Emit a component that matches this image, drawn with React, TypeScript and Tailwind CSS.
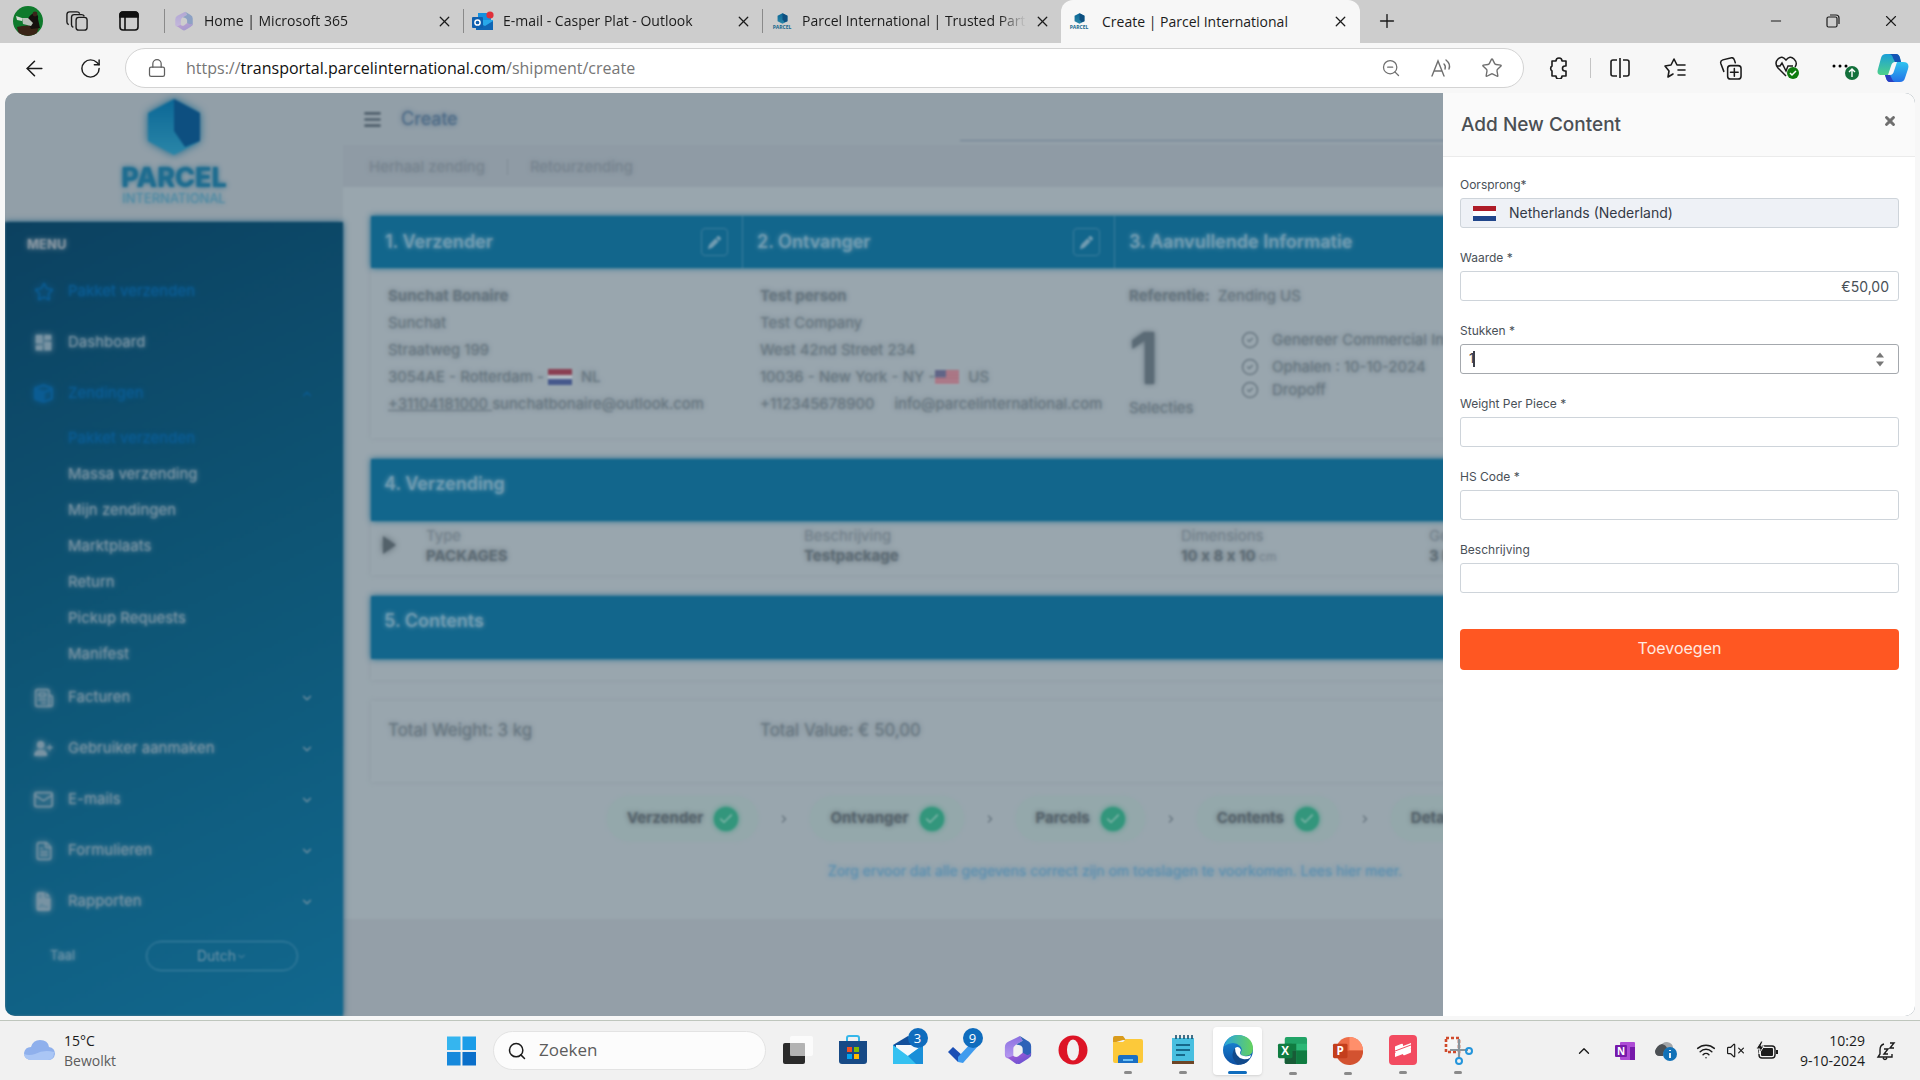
import { ReactNode, useState } from "react";
import {
  ArrowLeft,
  Check,
  ChevronDown,
  ChevronRight,
  ChevronUp,
  CircleCheck,
  FileText,
  Lock,
  Mail,
  Menu,
  Minus,
  Newspaper,
  Plus,
  RotateCw,
  Search,
  Star,
  VolumeX,
  Wifi,
  X,
  ZoomOut,
} from "lucide-react";
import { FaCube, FaFileContract, FaPen, FaUserPlus, FaXmark } from "react-icons/fa6";
import { MdDashboard } from "react-icons/md";

/* ---------- small drawings ---------- */

function ParcelMark({ className }: { className: string }) {
  return (
    <svg viewBox="0 0 54 58" className={className} aria-hidden="true">
      <defs>
        <linearGradient id="markFront" x1="0" y1="0" x2="0" y2="1">
          <stop offset="0" stopColor="#0b6796" />
          <stop offset="1" stopColor="#2a86a8" />
        </linearGradient>
      </defs>
      <path d="M27 1 53 15v28L27 57 1 43V15Z" fill="url(#markFront)" />
      <path d="M27 1 53 15v28L38 49 27 33Z" fill="#0d4f80" />
    </svg>
  );
}

function ParcelFavicon() {
  return (
    <span className="flex w-[18px] shrink-0 flex-col items-center">
      <ParcelMark className="h-[11px] w-[11px]" />
      <span className="text-[5px] leading-[6px] font-bold text-[#12668c]">PARCEL</span>
    </span>
  );
}

function LoopIcon({ className }: { className: string }) {
  return (
    <svg viewBox="0 0 32 32" className={className} aria-hidden="true">
      <defs>
        <linearGradient id="loopA" x1="0" y1="0" x2="1" y2="1">
          <stop offset="0" stopColor="#b35fd8" />
          <stop offset="1" stopColor="#5a4fd0" />
        </linearGradient>
        <linearGradient id="loopB" x1="0" y1="0" x2="0" y2="1">
          <stop offset="0" stopColor="#8a6fe0" />
          <stop offset="1" stopColor="#b79af0" />
        </linearGradient>
      </defs>
      <path d="M18 1 6 7Q2 9 2 13v8q0 4 4 4l5-2v-8q0-3 3-5l7-4Z" fill="url(#loopB)" />
      <path d="m18 1 8 5q4 2 4 6v9q0 3-4 3l-5-2v-7q0-3-3-4l-4-1 7-4Z" fill="#2f62b8" />
      <path d="M2 19q0 4 4 6l7 5q3 2 6 0l8-5q3-2 3-6-2 3-5 2l-4-2-5 4q-2 1-4 0l-1-1-5 2q-3 0-4-5Z" fill="url(#loopA)" />
    </svg>
  );
}

function OutlookIcon() {
  return (
    <svg viewBox="0 0 22 20" className="h-5 w-[22px] shrink-0" aria-hidden="true">
      <rect x="6" y="2" width="13" height="11" fill="#1490df" />
      <path d="M4 9h17v10H4Z" fill="#28a8ea" />
      <path d="m4 11 9 4 8-5v9H4Z" fill="#1066b5" />
      <rect x="0" y="6" width="11" height="11" rx="1" fill="#0f5fae" />
      <circle cx="5.5" cy="11.5" r="2.6" fill="none" stroke="#fff" strokeWidth="1.5" />
      <circle cx="18" cy="4" r="3.6" fill="#e0303a" />
    </svg>
  );
}

function Avatar() {
  return (
    <svg viewBox="0 0 30 30" className="h-[30px] w-[30px]" aria-hidden="true">
      <defs>
        <clipPath id="avatarClip">
          <circle cx="15" cy="15" r="15" />
        </clipPath>
      </defs>
      <g clipPath="url(#avatarClip)">
        <rect width="30" height="30" fill="#0f7a2c" />
        <path d="M4 21q10-3 22 0l-3 9H6Z" fill="#3a2416" />
        <path d="M14 15q2-6 7-8 5 1 4 6l2 9-9 1Z" fill="#15100e" />
        <path d="M9 12h6l5 5-2 3-8-2Z" fill="#b9c2b8" />
        <path d="M3 10l6 2v3l-5-1Z" fill="#d5dcd3" />
        <circle cx="22" cy="8" r="2.4" fill="#3b241b" />
      </g>
    </svg>
  );
}

function WorkspacesIcon() {
  return (
    <svg viewBox="0 0 24 24" className="h-[22px] w-[22px]" fill="none" stroke="#1b1b1b" strokeWidth="1.5" strokeLinejoin="round" aria-hidden="true">
      <rect x="11" y="8" width="12" height="14" rx="3" />
      <path d="M8 19q-2-1-2-3V8q0-3 3-3h8q2 0 3 2" />
      <path d="M3 16q-2-1-2-3V5q0-3 3-3h8q2 0 3 2" />
    </svg>
  );
}

function TabActionsIcon() {
  return (
    <svg viewBox="0 0 20 20" className="h-5 w-5" fill="none" stroke="#111" strokeWidth="1.6" aria-hidden="true">
      <rect x="1" y="1" width="18" height="18" rx="3" />
      <path d="M1 4q0-3 3-3h12q3 0 3 3v2H1Z" fill="#111" />
      <path d="M6 6v13" />
    </svg>
  );
}

function RestoreIcon() {
  return (
    <svg viewBox="0 0 14 14" className="h-[14px] w-[14px]" fill="none" stroke="#1b1b1b" strokeWidth="1.2" aria-hidden="true">
      <rect x="1" y="3" width="10" height="10" rx="1.5" />
      <path d="M4 1h6q3 0 3 3v6" />
    </svg>
  );
}

function PuzzleIcon() {
  return (
    <svg viewBox="0 0 22 22" className="h-[22px] w-[22px]" fill="none" stroke="#1b1b1b" strokeWidth="1.6" strokeLinejoin="round" aria-hidden="true">
      <path d="M8 4a3 3 0 0 1 6 0h4v5h-1a2.500 2.500 0 0 0 0 5h1v5h-4a3 3 0 0 1-6 0H4v-5a3 3 0 0 1 0-5V4Z" />
    </svg>
  );
}

function ReadAloudIcon() {
  return (
    <svg viewBox="0 0 22 20" className="h-5 w-[22px]" fill="none" stroke="#6f6f6f" strokeWidth="1.4" strokeLinecap="round" aria-hidden="true">
      <path d="M2 18 8 3l6 15M4 13h8M14 6q2 2 1 5M16 2q5 4 3 9" />
    </svg>
  );
}

function SplitIcon() {
  return (
    <svg viewBox="0 0 22 22" className="h-[22px] w-[22px]" fill="none" stroke="#1b1b1b" strokeWidth="1.6" aria-hidden="true">
      <path d="M8 3H4Q2 3 2 5v12q0 2 2 2h4M14 3h4q2 0 2 2v12q0 2-2 2h-4M11 1v20" />
    </svg>
  );
}

function FavoritesIcon() {
  return (
    <svg viewBox="0 0 24 22" className="h-[22px] w-6" fill="none" stroke="#1b1b1b" strokeWidth="1.6" strokeLinecap="round" strokeLinejoin="round" aria-hidden="true">
      <path d="M10 17 5 20l1-6-4-5 6-1 3-6 3 6h8M15 13h7M15 18h7" />
    </svg>
  );
}

function CollectionsIcon() {
  return (
    <svg viewBox="0 0 24 24" className="h-[23px] w-[23px]" fill="none" stroke="#1b1b1b" strokeWidth="1.6" strokeLinecap="round" aria-hidden="true">
      <rect x="9" y="9" width="14" height="14" rx="3" />
      <path d="M16 12v8M12 16h8M5 15 2 7q-1-3 2-4l8-2q3-1 4 2l1 3" />
    </svg>
  );
}

function EssentialsIcon() {
  return (
    <svg viewBox="0 0 26 26" className="h-[26px] w-[26px]" aria-hidden="true">
      <path d="M12 21 4 13Q0 8 4 4t8 1q4-5 8-1t1 8M2 11h4l2-3 4 8 2-5h5" fill="none" stroke="#1b1b1b" strokeWidth="1.5" />
      <circle cx="19" cy="18" r="6" fill="#0f7b0f" />
      <path d="m16 18 2 2 4-4" fill="none" stroke="#fff" strokeWidth="1.5" />
    </svg>
  );
}

function MoreIcon() {
  return (
    <svg viewBox="0 0 28 26" className="h-[26px] w-7" aria-hidden="true">
      <circle cx="3" cy="11" r="1.5" />
      <circle cx="9" cy="11" r="1.5" />
      <circle cx="15" cy="11" r="1.5" />
      <circle cx="21" cy="18" r="7" fill="#13703b" />
      <path d="M21 22v-8m-3 3 3-3 3 3" fill="none" stroke="#fff" strokeWidth="1.4" />
    </svg>
  );
}

function CopilotIcon() {
  return (
    <svg viewBox="0 0 32 30" className="h-[30px] w-8" aria-hidden="true">
      <defs>
        <linearGradient id="copA" x1="0" y1="0" x2="0" y2="1">
          <stop offset="0" stopColor="#1a9fd8" />
          <stop offset="1" stopColor="#4fd18a" />
        </linearGradient>
        <linearGradient id="copB" x1="0" y1="0" x2="0" y2="1">
          <stop offset="0" stopColor="#2fc4ef" />
          <stop offset="1" stopColor="#2472e8" />
        </linearGradient>
      </defs>
      <path d="M9 1h10q3 0 4 4l1 4h-6q-3 0-4 4l-3 9H5q-6 0-4-6l3-11q1-4 5-4Z" fill="url(#copA)" />
      <path d="M19 1q3 0 4 4l1 4h-6l-2-4q-1-4-4-4Z" fill="#1554b4" />
      <path d="M23 29H13q-3 0-4-4l-1-3h5q3 0 4-4l3-9h6q7 0 5 7l-3 9q-1 4-5 4Z" fill="url(#copB)" />
      <path d="M13 29q-3 0-4-4l-1-3h5l2 4q1 3 3 3Z" fill="#2b3fc0" />
    </svg>
  );
}

function FlagNL({ className }: { className: string }) {
  return (
    <svg viewBox="0 0 24 15" preserveAspectRatio="none" className={className} role="img" aria-label="NL">
      <rect width="24" height="5" fill="#ae1c28" />
      <rect y="5" width="24" height="5" fill="#fff" />
      <rect y="10" width="24" height="5" fill="#21468b" />
    </svg>
  );
}

function FlagNLDimmed({ className }: { className: string }) {
  return (
    <svg viewBox="0 0 24 16" preserveAspectRatio="none" className={className} role="img" aria-label="NL">
      <rect width="24" height="6" fill="#8a3f52" />
      <rect y="6" width="24" height="4" fill="#b4bdc4" />
      <rect y="10" width="24" height="6" fill="#46598c" />
    </svg>
  );
}

function FlagUS({ className }: { className: string }) {
  return (
    <svg viewBox="0 0 24 15" preserveAspectRatio="none" className={className} role="img" aria-label="US">
      <rect width="24" height="15" fill="#c98794" />
      <path d="M0 1h24M0 4h24M0 7h24M0 10h24M0 13h24" stroke="#a8324a" strokeWidth="1.6" />
      <rect width="11" height="8" fill="#3c3b6e" />
    </svg>
  );
}

/* ---------- browser ---------- */

const tabs: { title: string; icon: ReactNode }[] = [
  { title: "Home | Microsoft 365", icon: <LoopIcon className="h-5 w-5 shrink-0 opacity-40" /> },
  { title: "E-mail - Casper Plat - Outlook", icon: <OutlookIcon /> },
  { title: "Parcel International | Trusted Partner", icon: <ParcelFavicon /> },
];

function TabStrip() {
  return (
    <div className="flex h-[43px] items-center bg-[#cdcdcd] pb-px text-[#1b1b1b]">
      <div className="flex w-[164px] shrink-0 items-center gap-[23px] pl-[13px]">
        <button aria-label="Profile"><Avatar /></button>
        <button aria-label="Workspaces"><WorkspacesIcon /></button>
        <button aria-label="Tab actions" className="ml-2"><TabActionsIcon /></button>
      </div>
      {tabs.map((tab) => (
        <div key={tab.title} className="flex w-[299px] shrink items-center pr-[10px]">
          <span className="h-6 w-px shrink-0 bg-[#8a8a8a]" />
          <span className="ml-[8px] flex w-[22px] shrink-0 justify-center">{tab.icon}</span>
          <span className="ml-[9px] min-w-0 flex-1 overflow-hidden text-sm whitespace-nowrap [mask-image:linear-gradient(to_right,black_88%,transparent)]">
            {tab.title}
          </span>
          <button aria-label="Close tab" className="ml-2"><X size={17} strokeWidth={1.8} /></button>
        </div>
      ))}
      <div className="-mb-px flex h-[43px] w-[299px] shrink items-center rounded-t-xl bg-[#f7f7f7] pr-[11px] pl-[9px]">
        <ParcelFavicon />
        <span className="ml-[14px] flex-1 text-sm whitespace-nowrap">Create | Parcel International</span>
        <button aria-label="Close tab"><X size={17} strokeWidth={1.8} /></button>
      </div>
      <button aria-label="New tab" className="ml-4"><Plus size={22} strokeWidth={1.5} /></button>
      <div className="ml-auto flex items-center gap-[42px] pr-5">
        <button aria-label="Minimize"><Minus size={16} strokeWidth={1.5} /></button>
        <button aria-label="Restore"><RestoreIcon /></button>
        <button aria-label="Close"><X size={18} strokeWidth={1.5} /></button>
      </div>
    </div>
  );
}

function Toolbar() {
  return (
    <div className="flex h-[50px] items-center bg-[#f7f7f7] pr-[11px] pl-[22px] text-[#1b1b1b]">
      <button aria-label="Back"><ArrowLeft size={25} strokeWidth={1.5} /></button>
      <button aria-label="Refresh" className="ml-8"><RotateCw size={23} strokeWidth={1.5} /></button>
      <div className="ml-[23px] flex h-10 flex-1 items-center rounded-full border border-[#d3d3d3] bg-white pr-5 pl-[21px]">
        <Lock size={20} strokeWidth={1.5} className="text-[#5f5f5f]" />
        <span className="ml-[19px] flex-1 text-base text-[#767676]">
          https://<span className="text-[#111]">transportal.parcelinternational.com</span>/shipment/create
        </span>
        <div className="flex items-center gap-[29px] text-[#6f6f6f]">
          <button aria-label="Zoom"><ZoomOut size={20} strokeWidth={1.5} /></button>
          <button aria-label="Read aloud"><ReadAloudIcon /></button>
          <button aria-label="Add to favorites"><Star size={22} strokeWidth={1.5} /></button>
        </div>
      </div>
      <div className="flex items-center">
        <button aria-label="Extensions" className="ml-6"><PuzzleIcon /></button>
        <span className="ml-5 h-5 w-px bg-[#c4c4c4]" />
        <button aria-label="Split screen" className="ml-[18px]"><SplitIcon /></button>
        <button aria-label="Favorites" className="ml-8"><FavoritesIcon /></button>
        <button aria-label="Collections" className="ml-8"><CollectionsIcon /></button>
        <button aria-label="Browser essentials" className="ml-8"><EssentialsIcon /></button>
        <button aria-label="Settings and more" className="ml-[31px]"><MoreIcon /></button>
        <button aria-label="Copilot" className="ml-[18px]"><CopilotIcon /></button>
      </div>
    </div>
  );
}

/* ---------- sidebar ---------- */

const subItems = ["Massa verzending", "Mijn zendingen", "Marktplaats", "Return", "Pickup Requests", "Manifest"];

const bottomItems: { label: string; icon: ReactNode }[] = [
  { label: "Facturen", icon: <Newspaper size={20} className="-scale-x-100" /> },
  { label: "Gebruiker aanmaken", icon: <FaUserPlus size={19} /> },
  { label: "E-mails", icon: <Mail size={21} /> },
  { label: "Formulieren", icon: <FileText size={20} /> },
  { label: "Rapporten", icon: <FaFileContract size={19} /> },
];

function MenuItem({ label, icon, active, chevron }: { label: string; icon: ReactNode; active?: boolean; chevron?: ReactNode }) {
  return (
    <li>
      <a
        href="#"
        className={`flex h-[51px] items-center pr-[29px] pl-[28px] ${active ? "text-[#0b5c93]" : "text-[#7893a3]"}`}
      >
        <span className="flex w-[21px] justify-center drop-shadow-[0_0_3px_currentColor]">{icon}</span>
        <span className="ml-[14px] flex-1">{label}</span>
        {chevron}
      </a>
    </li>
  );
}

function Sidebar() {
  return (
    <aside className="relative z-10 flex w-[338px] shrink-0 flex-col">
      <div className="flex h-[129px] flex-col items-center bg-[#929fa8] pt-[5px]">
        <ParcelMark className="h-[58px] w-[54px] drop-shadow-[0_0_4px_#12668c]" />
        <span className="mt-[10px] text-[27px] leading-6 font-extrabold text-[#1f6d90]">PARCEL</span>
        <span className="text-[13px] leading-4 text-[#4d8aa4]">INTERNATIONAL</span>
      </div>
      <nav className="flex-1 bg-linear-[155deg,#0c4160,#0e5676_50%,#12688e] text-[15px] shadow-[0_0_6px_#12567a]">
        <p className="pt-3 pl-[22px] text-[13px] leading-5 font-bold text-[#8494a0]">MENU</p>
        <ul className="mt-3">
          <MenuItem label="Pakket verzenden" active icon={<Star size={20} />} />
          <MenuItem label="Dashboard" icon={<MdDashboard size={23} />} />
          <MenuItem label="Zendingen" active icon={<FaCube size={19} />} chevron={<ChevronUp size={14} />} />
          <li>
            <ul className="pt-px">
              <li>
                <a href="#" className="flex h-9 items-center pl-[63px] text-[#0b5c93]">Pakket verzenden</a>
              </li>
              {subItems.map((item) => (
                <li key={item}>
                  <a href="#" className="flex h-9 items-center pl-[63px] text-[#7893a3]">{item}</a>
                </li>
              ))}
            </ul>
          </li>
          {bottomItems.map((item) => (
            <MenuItem key={item.label} label={item.label} icon={item.icon} chevron={<ChevronDown size={14} />} />
          ))}
        </ul>
        <div className="mt-[14px] flex items-center justify-between pr-[45px] pl-[45px] text-[13px] text-[#6c93a8]">
          <span>Taal</span>
          <button className="flex h-[30px] w-[152px] items-center justify-center rounded-full border border-[#4585a3] text-sm">
            Dutch <ChevronDown size={11} />
          </button>
        </div>
      </nav>
    </aside>
  );
}

/* ---------- shipment page ---------- */

function EditButton({ label }: { label: string }) {
  return (
    <button aria-label={label} className="flex h-[28px] w-[27px] items-center justify-center rounded border border-[#3c7d9d]">
      <FaPen size={13} />
    </button>
  );
}

function SummaryCards() {
  return (
    <section className="shadow-[0_0_5px_#8e9ba4]">
      <div className="grid h-[52px] grid-cols-4 bg-[#12668c] text-lg font-semibold text-[#6f9bb1] shadow-[0_0_6px_#12668c]">
        <div className="flex items-center justify-between border-r border-[#3c7d9d] px-[14px]">
          <h2>1. Verzender</h2>
          <EditButton label="Verzender bewerken" />
        </div>
        <div className="flex items-center justify-between border-r border-[#3c7d9d] px-[14px]">
          <h2>2. Ontvanger</h2>
          <EditButton label="Ontvanger bewerken" />
        </div>
        <div className="col-span-2 flex items-center px-[14px]">
          <h2>3. Aanvullende Informatie</h2>
        </div>
      </div>
      <div className="grid grid-cols-4 pt-[14px] pb-[17px] text-[15px] leading-[27px] whitespace-nowrap">
        <div className="pl-[17px]">
          <p className="font-bold">Sunchat Bonaire</p>
          <p>Sunchat</p>
          <p>Straatweg 199</p>
          <p className="flex items-center">
            3054AE - Rotterdam - <FlagNLDimmed className="mr-[9px] ml-1 h-4 w-6" /> NL
          </p>
          <p>
            <a href="#" className="underline">+31104181000 </a>
            <span>sunchatbonaire@outlook.com</span>
          </p>
        </div>
        <div className="pl-[17px]">
          <p className="font-bold">Test person</p>
          <p>Test Company</p>
          <p>West 42nd Street 234</p>
          <p className="flex items-center">
            10036 - New York - NY - <FlagUS className="mr-[9px] h-[14px] w-6 opacity-60" /> US
          </p>
          <p className="flex gap-5">
            <span>+112345678900</span>
            <span>info@parcelinternational.com</span>
          </p>
        </div>
        <div className="col-span-2 pl-[14px]">
          <p>
            <b>Referentie:</b> <span className="ml-1">Zending US</span>
          </p>
          <div className="flex">
            <div className="w-[112px]">
              <p className="pt-[17px] text-[72px] leading-[64px] font-semibold text-[#5b6b76]">1</p>
              <p className="pt-1">Selecties</p>
            </div>
            <ul className="pt-[17px] leading-[27px]">
              <li className="flex items-center gap-[13px]"><CircleCheck size={18} />Genereer Commercial Invoice</li>
              <li className="flex items-center gap-[13px]"><CircleCheck size={18} />Ophalen : 10-10-2024</li>
              <li className="flex items-center gap-[13px] leading-5"><CircleCheck size={18} />Dropoff</li>
            </ul>
          </div>
        </div>
      </div>
    </section>
  );
}

function Steps() {
  const steps = ["Verzender", "Ontvanger", "Parcels", "Contents", "Details"];
  return (
    <ol className="mt-[14px] flex items-center pl-[236px] text-[15px] font-bold">
      {steps.map((step, i) => (
        <li key={step} className="flex items-center">
          {i > 0 && <ChevronRight size={12} strokeWidth={3} className="mx-5" />}
          <span className="flex h-[45px] items-center gap-[11px] rounded-full bg-[#94a8ab] px-5 text-[#58666e] shadow-[0_0_4px_#94a8ab]">
            {step}
            <span className="flex h-6 w-6 items-center justify-center rounded-full bg-[#33967c] text-[#93bdb4] shadow-[0_0_5px_#33967c]">
              <Check size={16} strokeWidth={1.8} />
            </span>
          </span>
        </li>
      ))}
    </ol>
  );
}

function ShipmentPage() {
  return (
    <main className="min-w-0 flex-1 overflow-hidden bg-[#949fa8] text-[#697882]">
      <header className="flex h-[52px] items-center bg-[#929fa8] pr-[60px] pl-[19px]">
        <button aria-label="Menu" className="text-[#4f5f6b]"><Menu size={21} strokeWidth={3} /></button>
        <h1 className="ml-[18px] text-lg text-[#4f6c87]">Create</h1>
        <input aria-label="Zoeken in portaal" className="ml-auto h-[48px] w-[895px] self-start border-b border-[#6f8094] bg-transparent" />
      </header>
      <div className="flex h-[42px] items-center bg-[#8f9ba5] pt-0.5 pl-[26px] text-[15px] text-[#788590]">
        <a href="#">Herhaal zending</a>
        <span className="mx-[22px] h-4 w-px bg-[#808c96]" />
        <a href="#">Retourzending</a>
      </div>
      <div className="bg-[#99a6ae] pt-[29px] pr-14 pb-[38px] pl-7">
        <SummaryCards />
        <section className="mt-[21px] shadow-[0_0_5px_#8e9ba4]">
          <h2 className="h-[62px] bg-[#12668c] pt-3 pl-[13px] text-lg leading-[26px] font-semibold text-[#6f9bb1] shadow-[0_0_6px_#12668c]">
            4. Verzending
          </h2>
          <table className="w-full table-fixed text-left text-[15px] leading-5">
            <colgroup>
              <col className="w-[55px]" />
              <col className="w-[378px]" />
              <col className="w-[377px]" />
              <col className="w-[248px]" />
              <col />
            </colgroup>
            <tbody>
              <tr className="text-[#76848e]">
                <td rowSpan={2} className="pl-3">
                  <button aria-label="Uitklappen" className="block pb-1.5">
                    <svg viewBox="0 0 13 18" className="h-[18px] w-[13px] drop-shadow-[0_0_3px_#53616a]"><path d="M0 0 13 9 0 18Z" fill="#53616a" /></svg>
                  </button>
                </td>
                <th className="pt-[5px] font-normal">Type</th>
                <th className="pt-[5px] font-normal">Beschrijving</th>
                <th className="pt-[5px] font-normal">Dimensions</th>
                <th className="pt-[5px] font-normal">Gewicht</th>
              </tr>
              <tr className="font-bold text-[#606e77]">
                <td className="pb-[9px]">PACKAGES</td>
                <td className="pb-[9px]">Testpackage</td>
                <td className="pb-[9px] [font-feature-settings:'calt'_0]">10 x 8 x 10 <span className="text-xs font-normal text-[#7b8892]">cm</span></td>
                <td className="pb-[9px]">3 kg</td>
              </tr>
            </tbody>
          </table>
        </section>
        <section className="mt-[21px] pb-[21px] shadow-[0_0_5px_#8e9ba4]">
          <h2 className="h-[63px] bg-[#12668c] pt-3 pl-[13px] text-lg leading-[26px] font-semibold text-[#6f9bb1] shadow-[0_0_6px_#12668c]">
            5. Contents
          </h2>
        </section>
        <section className="mt-[21px] grid h-[81px] grid-cols-4 pt-4 text-[17px] leading-[26px] shadow-[0_0_5px_#8e9ba4]">
          <p className="pl-[17px]">Total Weight: 3 kg</p>
          <p className="pl-[17px]">Total Value: € 50,00</p>
        </section>
        <Steps />
        <p className="mt-5 text-center text-sm leading-5 whitespace-nowrap">
          <a href="#" className="text-[#5f91b0]">
            Zorg ervoor dat alle gegevens correct zijn om toeslagen te voorkomen. Lees hier meer.
          </a>
        </p>
      </div>
    </main>
  );
}

/* ---------- drawer ---------- */

const inputClass = "h-[30px] w-full rounded-[3px] border border-[#ced4da] bg-white px-[9px] text-sm text-[#495057] outline-none";

function Field({ id, label, children }: { id: string; label: string; children: ReactNode }) {
  return (
    <div className="mb-[21px]">
      <label htmlFor={id} className="mb-1 block text-xs leading-[18px] text-[#495057]">{label}</label>
      {children}
    </div>
  );
}

function ContentDrawer() {
  const [value, setValue] = useState("€50,00");
  const [pieces, setPieces] = useState("1");
  const [weight, setWeight] = useState("");
  const [hsCode, setHsCode] = useState("");
  const [description, setDescription] = useState("");

  const step = (n: number) => setPieces(String(Math.max(0, Number(pieces) + n)));

  return (
    <aside className="absolute inset-y-0 right-0 z-20 w-[472px] bg-white font-['Inter',sans-serif]">
      <div className="flex h-[64px] items-center justify-between border-b border-[#ebebeb] bg-[#fafafa] pr-[18px] pl-[18px] text-[#4b4f54]">
        <h2 className="pt-0.5 text-[19px] font-medium">Add New Content</h2>
        <button aria-label="Close" className="pb-2 text-[#6d6d6d]"><FaXmark size={14} strokeWidth={40} stroke="currentColor" /></button>
      </div>
      <form className="pt-[19px] pr-4 pl-[17px]" onSubmit={(e) => e.preventDefault()}>
        <Field id="origin" label="Oorsprong*">
          <div className="flex h-[30px] items-center rounded-[3px] border border-[#ced4da] bg-[#eef1f6] pl-3">
            <FlagNL className="h-[15px] w-[23px]" />
            <input id="origin" readOnly value="Netherlands (Nederland)" className="ml-[13px] flex-1 bg-transparent text-sm text-[#343a46] outline-none" />
          </div>
        </Field>
        <Field id="value" label="Waarde *">
          <input id="value" value={value} onChange={(e) => setValue(e.target.value)} className={`${inputClass} text-right`} />
        </Field>
        <Field id="pieces" label="Stukken *">
          <div className="relative flex h-[30px] items-center rounded-[3px] border border-[#a4a8ad] px-2">
            <input
              id="pieces"
              type="number"
              value={pieces}
              onChange={(e) => setPieces(e.target.value)}
              className="min-w-0 flex-1 appearance-none bg-transparent text-[13px] text-[#343a46] outline-none [&::-webkit-inner-spin-button]:appearance-none"
            />
            <span className="absolute left-3 h-4 w-0.5 bg-[#3b3f48]" />
            <div className="mr-[6px] flex flex-col gap-[3px]">
              <button type="button" aria-label="Meer" onClick={() => step(1)}>
                <svg viewBox="0 0 8 5" className="block h-[6px] w-2"><path d="M0 5 4 0l4 5Z" fill="#777" /></svg>
              </button>
              <button type="button" aria-label="Minder" onClick={() => step(-1)}>
                <svg viewBox="0 0 8 5" className="block h-[6px] w-2"><path d="M0 0l4 5 4-5Z" fill="#777" /></svg>
              </button>
            </div>
          </div>
        </Field>
        <Field id="weight" label="Weight Per Piece *">
          <input id="weight" value={weight} onChange={(e) => setWeight(e.target.value)} className={inputClass} />
        </Field>
        <Field id="hscode" label="HS Code *">
          <input id="hscode" value={hsCode} onChange={(e) => setHsCode(e.target.value)} className={inputClass} />
        </Field>
        <Field id="description" label="Beschrijving">
          <input id="description" value={description} onChange={(e) => setDescription(e.target.value)} className={inputClass} />
        </Field>
        <button className="mt-[15px] h-[41px] w-full rounded bg-[#ff5722] pb-1 text-base text-[#ffe9e0]">Toevoegen</button>
      </form>
    </aside>
  );
}

/* ---------- taskbar ---------- */

function OfficeTile({ letter, variant }: { letter: string; variant: "excel" | "ppt" }) {
  return (
    <svg viewBox="0 0 32 32" className="h-[31px] w-[31px]" aria-hidden="true">
      {variant === "excel" ? (
        <>
          <rect x="8" y="2" width="23" height="28" rx="2" fill="#21a366" />
          <path d="M8 9h12v7H8Z" fill="#107c41" />
          <path d="M20 9h11v7H20Z" fill="#33c481" opacity=".6" />
          <path d="M8 16h12v14H10q-2 0-2-2Z" fill="#185c37" />
          <path d="M20 16h11v12q0 2-2 2h-9Z" fill="#107c41" />
          <rect x="1" y="9" width="15" height="15" rx="1.5" fill="#107c41" />
        </>
      ) : (
        <>
          <circle cx="18" cy="16" r="14" fill="#ed6c47" />
          <path d="M18 2a14 14 0 0 1 14 14H18Z" fill="#ff8f6b" />
          <path d="M4 18a14 14 0 0 0 28-2H18Z" fill="#d35230" />
          <rect x="1" y="9" width="15" height="15" rx="1.5" fill="#c43e1c" />
        </>
      )}
      <text x="8.5" y="21" textAnchor="middle" fontSize="12" fontWeight="700" fill="#fff">{letter}</text>
    </svg>
  );
}

function Badged({ count, children }: { count: number; children: ReactNode }) {
  return (
    <span className="relative block">
      {children}
      <span className="absolute -top-[7px] -right-[5px] flex h-5 w-5 items-center justify-center rounded-full bg-[#0f6cbd] text-[13px] text-white">
        {count}
      </span>
    </span>
  );
}

const icon = "block h-[30px] w-[30px]";

const apps: { name: string; drawing: ReactNode; running?: boolean; active?: boolean }[] = [
  {
    name: "Task view",
    drawing: (
      <svg viewBox="0 0 30 30" className={icon}>
        <rect x="0" y="8" width="22" height="21" rx="2" fill="#2b2b2b" />
        <rect x="7" y="1" width="23" height="20" rx="2" fill="#fff" opacity=".72" />
        <rect x="7" y="8" width="15" height="13" fill="#a8a8a8" opacity=".6" />
      </svg>
    ),
  },
  {
    name: "Store",
    drawing: (
      <svg viewBox="0 0 30 30" className={icon}>
        <path d="M9 8V3q0-2 2-2h8q2 0 2 2v5" fill="none" stroke="#36b7ea" strokeWidth="2" />
        <path d="M1 6h28v20q0 3-3 3H4q-3 0-3-3Z" fill="#174a86" />
        <path d="M9 12h5v5H9Z" fill="#f25022" />
        <path d="M16 12h5v5h-5Z" fill="#7fba00" />
        <path d="M9 19h5v5H9Z" fill="#00a4ef" />
        <path d="M16 19h5v5h-5Z" fill="#ffb900" />
      </svg>
    ),
  },
  {
    name: "Mail",
    drawing: (
      <Badged count={3}>
        <svg viewBox="0 0 30 30" className={icon}>
          <path d="M0 10 15 1l15 9v5H0Z" fill="#12509c" />
          <path d="M3 10h24v12H3Z" fill="#f4f8fb" />
          <path d="M0 10l15 11 15-11v19H0Z" fill="#35c1f1" />
          <path d="m15 21 15-11v19H23Z" fill="#1a8fd8" />
        </svg>
      </Badged>
    ),
  },
  {
    name: "To Do",
    drawing: (
      <Badged count={9}>
        <svg viewBox="0 0 30 30" className={icon}>
          <path d="m0 17 5-5 10 9-5 6Z" fill="#1b4fb5" />
          <path d="m10 27 5 1L30 11l-5-5-15 16Z" fill="#3f9bee" />
        </svg>
      </Badged>
    ),
  },
  { name: "Microsoft 365", drawing: <LoopIcon className={icon} /> },
  {
    name: "Opera",
    drawing: (
      <svg viewBox="0 0 30 30" className={icon}>
        <circle cx="15" cy="15" r="14.5" fill="#dd1426" />
        <ellipse cx="15" cy="15" rx="6" ry="10.5" fill="#f1f1f1" />
      </svg>
    ),
  },
  {
    name: "Explorer",
    running: true,
    drawing: (
      <svg viewBox="0 0 30 30" className={icon}>
        <path d="M0 3q0-2 2-2h8l3 4h-3L0 8Z" fill="#d99b1c" />
        <path d="M0 7h10l3-3h15q2 0 2 2v20q0 2-2 2H2q-2 0-2-2Z" fill="#fcc93a" />
        <path d="M5 28v-6q0-2 2-2h16q2 0 2 2v6Z" fill="#1a6fc4" />
        <path d="M10 25h10" stroke="#6cc0f5" strokeWidth="2" />
      </svg>
    ),
  },
  {
    name: "Notepad",
    running: true,
    drawing: (
      <svg viewBox="0 0 30 30" className={icon}>
        <path d="M4 3h22v24H4Z" fill="#48bfe0" />
        <path d="M4 26h22v3H4Z" fill="#6d4526" />
        <path d="M8 0v4M12 0v4M16 0v4M20 0v4M24 0v4" stroke="#174f6d" strokeWidth="1.6" />
        <path d="M8 10h14M8 15h14M8 20h9" stroke="#16688a" strokeWidth="2" />
      </svg>
    ),
  },
  {
    name: "Edge",
    running: true,
    active: true,
    drawing: (
      <svg viewBox="0 0 30 30" className={icon}>
        <defs>
          <linearGradient id="edgeTop" x1="0" y1="0" x2="1" y2="0">
            <stop offset="0" stopColor="#2aa5dd" />
            <stop offset="1" stopColor="#66d35b" />
          </linearGradient>
          <linearGradient id="edgeLeft" x1="0" y1="0" x2="0" y2="1">
            <stop offset="0" stopColor="#1b8fdb" />
            <stop offset="1" stopColor="#0c4ea2" />
          </linearGradient>
        </defs>
        <circle cx="15" cy="15" r="15" fill="url(#edgeLeft)" />
        <path d="M1 11Q5 0 15 0q14 1 15 13 0 8-8 8-5 0-4-4 2-3-1-6Q11 5 1 11Z" fill="url(#edgeTop)" />
        <path d="M12 13q-2 12 9 12 4 0 6-2l1-3q-3 2-7 1-6-1-3-6-2-5-6-2Z" fill="#fff" />
        <path d="M12 13q-6 8 2 16 9 2 13-6-3 2-7 1-8-2-8-11Z" fill="#114a8b" />
      </svg>
    ),
  },
  { name: "Excel", running: true, drawing: <OfficeTile letter="X" variant="excel" /> },
  { name: "PowerPoint", running: true, drawing: <OfficeTile letter="P" variant="ppt" /> },
  {
    name: "Planner",
    running: true,
    drawing: (
      <svg viewBox="0 0 30 30" className={icon}>
        <rect x="1" width="28" height="30" rx="4" fill="#f24b60" />
        <path d="M7 12q0-1 1-1l5-2q2-1 2 1v1l8-3v5l-15 5-1-1ZM7 18l15-5q1 0 1 1v3q0 1-1 1l-5 2q-2 1-2-1l-8 3Z" fill="#fff" />
        <path d="m7 16 16-6" stroke="#f24b60" strokeWidth="1" />
      </svg>
    ),
  },
  {
    name: "Snipping Tool",
    running: true,
    drawing: (
      <svg viewBox="0 0 30 30" className={icon} fill="none">
        <path d="M3 3h13v14H3Z" fill="#f7f7f7" stroke="#d04a2b" strokeWidth="2.6" strokeDasharray="3 2" />
        <path d="M16 4v19M7 15h18" stroke="#8a949b" strokeWidth="2.2" />
        <circle cx="26" cy="16" r="3" stroke="#2595db" strokeWidth="2" />
        <circle cx="16" cy="26" r="3" stroke="#2595db" strokeWidth="2" />
      </svg>
    ),
  },
];

function Taskbar() {
  return (
    <footer className="mt-1 flex h-[60px] items-center border-t border-[#bfc6bd] bg-[#f1f1f1] text-sm text-[#1b1b1b]">
      <div className="flex w-[434px] shrink-0 items-center gap-[9px] pl-6">
        <svg viewBox="0 0 31 21" className="h-[21px] w-[31px]" aria-hidden="true">
          <path d="M8 20Q0 20 0 13q1-6 7-6 2-7 9-7 8 0 9 7 6 1 6 7-1 6-7 6Z" fill="#8fb0ec" />
          <path d="M8 20q-7 0-8-6 5 2 11 0 9-5 19-2 0 8-6 8Z" fill="#aac6f5" />
        </svg>
        <div className="leading-5">
          <p>15°C</p>
          <p className="text-[#5c5c5c]">Bewolkt</p>
        </div>
      </div>
      <button aria-label="Start" className="ml-[13px]">
        <svg viewBox="0 0 30 30" className="h-[30px] w-[29px]">
          <path d="M0 0h14v14H0Z" fill="#35b5ef" />
          <path d="M16 0h14v14H16Z" fill="#1b9de8" />
          <path d="M0 16h14v14H0Z" fill="#1689dc" />
          <path d="M16 16h14v14H16Z" fill="#0a6fca" />
        </svg>
      </button>
      <label className="ml-[17px] flex h-[39px] w-[273px] items-center rounded-full border border-[#e3e3e3] bg-[#fcfcfc] pl-[13px]">
        <Search size={20} strokeWidth={1.8} />
        <input aria-label="Zoeken" placeholder="Zoeken" className="ml-3 w-[200px] bg-transparent text-[17px] outline-none placeholder:text-[#5c5c5c]" />
      </label>
      <div className="ml-1 flex">
        {apps.map((app) => (
          <button
            key={app.name}
            aria-label={app.name}
            className={`mx-[3px] flex h-12 w-[49px] flex-col items-center justify-center rounded ${app.active ? "bg-white shadow-sm" : ""}`}
          >
            <span className="pt-2">{app.drawing}</span>
            <span
              className={`mt-[6px] h-[3px] rounded-full ${app.active ? "w-[19px] bg-[#0f6cbd]" : app.running ? "w-2 bg-[#8a8a8a]" : "w-2"}`}
            />
          </button>
        ))}
      </div>
      <div className="ml-auto flex items-center pr-6">
        <button aria-label="Hidden icons"><ChevronUp size={18} strokeWidth={1.8} /></button>
        <svg viewBox="0 0 20 18" className="ml-[22px] h-[18px] w-5" aria-label="OneNote" role="img">
          <rect x="5" width="15" height="18" rx="1" fill="#ae4bd5" />
          <path d="M15 5h5v13h-5Z" fill="#7719aa" />
          <rect y="3" width="12" height="12" rx="1" fill="#7719aa" />
          <text x="6" y="13" textAnchor="middle" fontSize="10" fontWeight="700" fill="#fff">N</text>
        </svg>
        <svg viewBox="0 0 22 20" className="ml-5 h-5 w-[22px]" aria-label="OneDrive" role="img">
          <path d="M5 15q-5 0-5-5 1-4 5-4 2-5 7-5 6 1 6 6 2 1 2 3v5Z" fill="#a3a6a9" />
          <path d="M5 15q-5 0-5-5 2-6 7-7 4 1 5 4-4 3-4 8Z" fill="#4c5054" />
          <circle cx="15" cy="13" r="7" fill="#1272b8" />
          <path d="M15 12v5M15 9v1" stroke="#fff" strokeWidth="1.8" />
        </svg>
        <Wifi size={20} strokeWidth={1.8} className="ml-[19px]" />
        <VolumeX size={19} strokeWidth={1.5} className="ml-[10px]" />
        <svg viewBox="0 0 24 20" className="ml-[10px] h-5 w-6" aria-label="Battery" role="img">
          <rect x="4" y="5" width="16" height="12" rx="3" fill="none" stroke="#1b1b1b" strokeWidth="1.4" />
          <rect x="6" y="7" width="12" height="8" rx="1" fill="#1b1b1b" />
          <path d="M22 9v4" stroke="#1b1b1b" strokeWidth="2" />
          <path d="M6 0 1 8h4l-1 5 5-8H6l2-5Z" fill="#1b1b1b" stroke="#f1f1f1" />
        </svg>
        <div className="ml-[10px] w-[76px] text-right leading-5">
          <p>10:29</p>
          <p>9-10-2024</p>
        </div>
        <svg viewBox="0 0 20 20" className="ml-[11px] h-5 w-5" fill="none" stroke="#1b1b1b" strokeWidth="1.4" aria-label="Notifications" role="img">
          <path d="M8 3Q4 4 4 9v4l-2 3h14v-3M7 17q2 3 4 0M8 8h4l-4 5h4M14 2h4l-4 5h4" />
        </svg>
      </div>
    </footer>
  );
}

export default function App() {
  return (
    <div className="flex min-h-screen flex-col overflow-hidden bg-[#f7f7f7] font-['Open_Sans',sans-serif]">
      <TabStrip />
      <Toolbar />
      <div className="relative mx-[5px] flex flex-1 overflow-hidden rounded-[10px] bg-[#929fa8]">
        {/* everything behind the drawer is out of focus */}
        <div className="flex flex-1 font-['Inter',sans-serif] blur-[1px] [text-shadow:0_0_5px_currentColor]">
          <Sidebar />
          <ShipmentPage />
        </div>
        <ContentDrawer />
      </div>
      <Taskbar />
    </div>
  );
}
